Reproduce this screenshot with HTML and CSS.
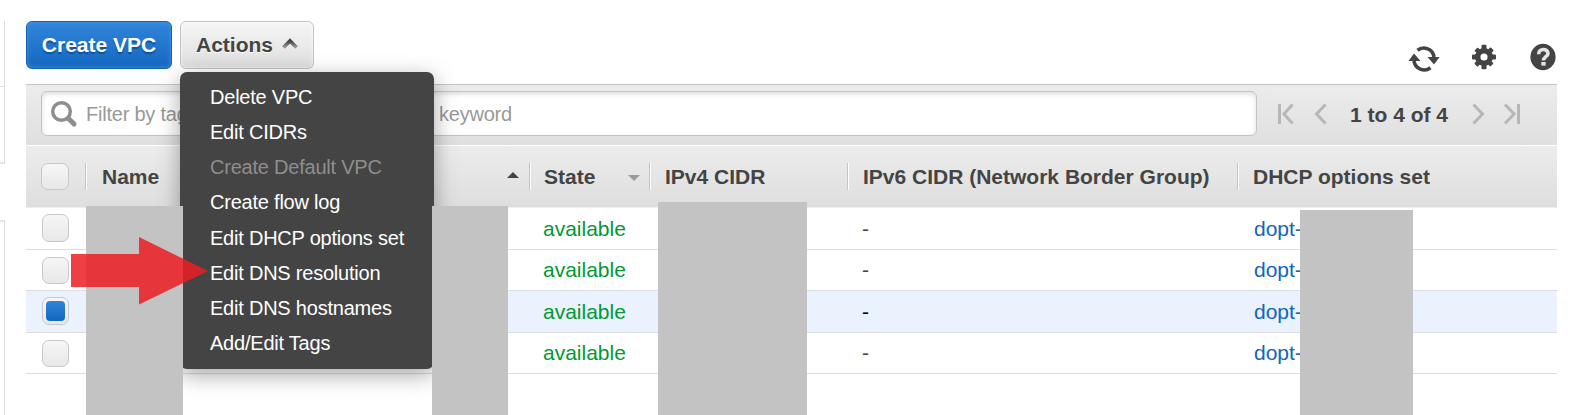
FILE: index.html
```html
<!DOCTYPE html>
<html lang="en">
<head>
<meta charset="utf-8">
<title>VPC Dashboard</title>
<link rel="stylesheet" href="styles.css">
</head>
<body>
<div class="page">
  <aside class="side">
    <div class="side-box side-top"></div>
    <div class="side-box side-mid"></div>
    <div class="side-box side-low"></div>
  </aside>
  <main class="main">
    <header class="actions">
      <button class="btn primary">Create VPC</button>
      <div class="menu-anchor">
        <button class="btn">Actions
          <svg class="caret" width="16" height="12" viewBox="0 0 16 12"><defs><linearGradient id="fade" x2="0" y2="1"><stop stop-color="#444"/><stop offset="1" stop-color="#999"/></linearGradient></defs><path d="M1.500 9.500 8 3l6.500 6.500" fill="none" stroke="url(#fade)" stroke-width="3.800"/></svg>
        </button>
        <ul class="menu">
          <li>Delete VPC</li>
          <li>Edit CIDRs</li>
          <li class="disabled">Create Default VPC</li>
          <li>Create flow log</li>
          <li>Edit DHCP options set</li>
          <li>Edit DNS resolution</li>
          <li>Edit DNS hostnames</li>
          <li>Add/Edit Tags</li>
        </ul>
      </div>
      <div class="tools">
        <svg class="refresh" width="32" height="26" viewBox="0 0 32 26"><g fill="none" stroke="#444" stroke-width="3.600"><path d="M9.500 4.200A10.300 10.300 0 0 1 26 11"/><path d="M22.500 21.800A10.300 10.300 0 0 1 6 15"/></g><path d="M19.500 11H31.500L26 18.500zM.5 15h12L6 7.500z" fill="#444"/></svg>
        <svg class="gear" width="24" height="26" viewBox="-12 -13 24 26"><g fill="#444"><circle r="9"/><g id="teeth"><rect x="-2.500" y="-12.300" width="5" height="24.600" rx="1"/><rect x="-12" y="-2.500" width="24" height="5" rx="1"/></g><use href="#teeth" transform="rotate(45) scale(.94)"/></g><circle r="3.600" fill="#fff"/></svg>
        <svg class="help" width="26" height="28" viewBox="0 0 26 28"><ellipse cx="13" cy="14" rx="12.600" ry="13.200" fill="#444"/><path d="M8.600 11.200c0-6.200 9.400-6 9.400-.8 0 3.300-4.500 3.300-4.500 7" fill="none" stroke="#e4e4e4" stroke-width="3.600"/><rect x="11.300" y="19" width="4.400" height="3.600" fill="#e4e4e4"/></svg>
      </div>
    </header>
    <div class="filter">
      <div class="search">
        <svg width="28" height="28" viewBox="0 0 28 28"><circle cx="11.500" cy="11.500" r="8.800" fill="none" stroke="#8e8e8e" stroke-width="3.500"/><path d="m18.500 18.500 5.500 5.500" stroke="#8e8e8e" stroke-width="5" stroke-linecap="round"/></svg>
        <span class="hint">Filter by tags and attributes or search <span class="by">by</span> keyword</span>
      </div>
      <div class="pager">
        <svg width="18" height="22" viewBox="0 0 18 22"><path d="M2.500 1v20M15.500 1.500 7 11l8.500 9.500" /></svg>
        <svg class="prev" width="13" height="22" viewBox="0 0 13 22"><path d="M11.500 1.500 2.500 11l9 9.500"/></svg>
        <span>1 to 4 of 4</span>
        <svg class="next" width="13" height="22" viewBox="0 0 13 22"><path d="m1.500 1.500 9 9.500-9 9.500"/></svg>
        <svg width="18" height="22" viewBox="0 0 18 22"><path d="M15.500 1v20M2 1.500 11 11l-9 9.500"/></svg>
      </div>
    </div>
    <div class="table">
      <div class="row head">
        <div><i class="check"></i></div>
        <div class="col name">Name <b class="sort up"></b></div>
        <div class="col state">State <b class="sort down"></b></div>
        <div class="col">IPv4 CIDR</div>
        <div class="col">IPv6 CIDR (Network Border Group)</div>
        <div class="col">DHCP options set</div>
      </div>
      <div class="row tall"><div><i class="check"></i></div><div></div><div class="ok">available</div><div></div><div>-</div><div><a>dopt-</a></div></div>
      <div class="row"><div><i class="check"></i></div><div></div><div class="ok">available</div><div></div><div>-</div><div><a>dopt-</a></div></div>
      <div class="row tall selected"><div><i class="check on"></i></div><div></div><div class="ok">available</div><div></div><div>-</div><div><a>dopt-</a></div></div>
      <div class="row"><div><i class="check"></i></div><div></div><div class="ok">available</div><div></div><div>-</div><div><a>dopt-</a></div></div>
    </div>
  </main>
  <div class="mask mask-name"></div>
  <div class="mask mask-id"></div>
  <div class="mask mask-cidr"></div>
  <div class="mask mask-dhcp"></div>
  <svg class="pointer" width="138" height="68" viewBox="0 0 138 68"><path d="M0 17h68V0l69 34-69 33.500V50H0z" fill="#ed1c24" fill-opacity=".85"/></svg>
</div>
</body>
</html>
```
FILE: styles.css
```css
* { box-sizing: border-box; }
body { margin: 0; background: #fff; color: #444; font: 21px "Liberation Sans", Arial, sans-serif; }
.page { position: relative; display: flex; width: 1575px; height: 415px; overflow: hidden; }
.side { width: 26px; padding-top: 21px; }
.side-box { width: 5px; border-right: 1px solid #ddd; }
.side-top { height: 66px; border-bottom: 1px solid #ddd; }
.side-mid { height: 77px; border-bottom: 2px solid #e4e4e4; }
.side-low { height: 200px; margin-top: 56px; border-top: 2px solid #e4e4e4; }
.main { width: 1531px; }

.actions { display: flex; height: 84px; padding-top: 21px; gap: 8px; }
.btn { display: flex; align-items: center; justify-content: center; height: 48px; width: 134px; padding: 0; gap: 9px; border: 1px solid #c4c4c4; border-radius: 6px; background: linear-gradient(#f6f6f6, #dedede); box-shadow: inset 0 0 3px #fff; color: #444; font: bold 21px "Liberation Sans", Arial, sans-serif; text-shadow: 0 1px #fff; white-space: nowrap; }
.primary { width: 146px; border-color: #1261b2; background: linear-gradient(#3085da, #1467be); box-shadow: inset 0 0 4px #4a98e6; color: #fff; text-shadow: 0 2px 1px #0d529a; }
.caret { margin-top: -3px; }
.menu-anchor { position: relative; }
.menu { position: absolute; z-index: 2; top: 51px; left: 0; width: 254px; height: 297px; margin: 0; padding: 8px 0 0 30px; list-style: none; border-radius: 7px; background: #444; box-shadow: 0 6px 22px rgba(0, 0, 0, .35); color: #fff; font-size: 20px; line-height: 35.130px; letter-spacing: -.22px; white-space: nowrap; }
.disabled { color: #8e8e8e; }
.tools { display: flex; margin-left: auto; }
.refresh { margin: 25px 32px 0 0; }
.gear { margin: 23px 34px 0 0; }
.help { margin: 22px 1px 0 0; }

.filter { display: flex; height: 61px; padding: 6px 0 0 15px; border-top: 1px solid #c4c4c4; background: linear-gradient(#ececec, #dfdfdf); }
.search { display: flex; align-items: center; width: 1216px; height: 45px; padding-left: 8px; gap: 8px; border: 1px solid #c4c4c4; border-radius: 6px; background: #fff; box-shadow: inset 0 2px 5px #ddd; color: #999; font-size: 20px; letter-spacing: -.22px; }
.hint { padding-top: 2px; }
.by { margin: 0 5px 0 -5px; }
.pager { display: flex; align-items: center; height: 46px; padding-left: 20px; font-weight: bold; white-space: nowrap; }
.pager span { padding-top: 2px; }
.pager path { fill: none; stroke: #b7b7b7; stroke-width: 3; }
.prev { margin: 0 23px 0 19px; }
.next { margin: 0 18px 0 24px; }

.row { display: grid; grid-template-columns: 59px 444px 120px 198px 390px 320px; height: 41px; align-items: center; border-bottom: 1px solid #ddd; }
.row > div { display: flex; align-items: center; padding-left: 15px; }
.row > div:first-child { padding-left: 16px; }
.row.tall { height: 42px; }
.row > div:last-child { padding-left: 17px; }
.row > .ok { padding-left: 14px; color: #093; }
.row a { color: #1166bb; }
.selected { background: #eaf2fe; color: #000; }
.head.row { height: 63px; border-top: 1px solid #fff; border-bottom-color: #eee; background: linear-gradient(#ececec, #dedede); font-weight: bold; }
.head.row > div:first-child { padding-left: 15px; }
.row > .col { height: 27px; border-left: 1px solid #c4c4c4; box-shadow: inset 1px 0 #fff; }
.head.row > .col { padding-left: 15px; }
.head.row > .name { padding-left: 16px; }
.head.row > .state { padding-left: 14px; }
.check { display: block; width: 27px; height: 27px; border: 1px solid #c8c8c8; border-radius: 7px; background: linear-gradient(#f6f6f6, #e8e8e8); }
.head .check { width: 28px; }
.tall .check { height: 28px; margin-top: -1px; }
.check.on { padding: 3px; }
.check.on::before { content: ""; display: block; width: 19px; height: 20px; border-radius: 4px; background: linear-gradient(#3085da, #1467be); }
.sort { margin-left: auto; border: 6px solid transparent; }
.up { margin-right: 10px; margin-top: -3px; border-top: 0; border-bottom-color: #444; }
.down { margin-right: 9px; margin-top: 2px; border-bottom: 0; border-top-color: #999; }

.mask { position: absolute; z-index: 3; top: 206px; bottom: 0; background: #c3c3c3; }
.mask-name { left: 86px; width: 97px; }
.mask-id { left: 432px; width: 76px; }
.mask-cidr { left: 658px; top: 202px; width: 149px; }
.mask-dhcp { left: 1300px; top: 210px; width: 113px; }
.pointer { position: absolute; z-index: 4; left: 71px; top: 237px; }
```
